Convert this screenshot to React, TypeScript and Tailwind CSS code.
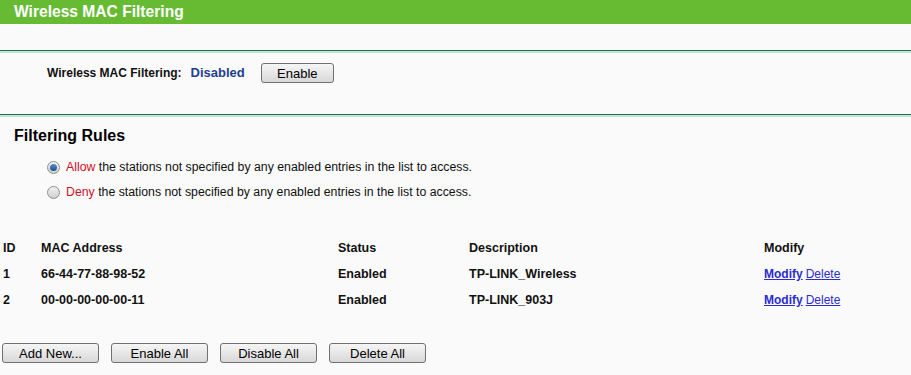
const entries = [
  { id: 1, mac: "66-44-77-88-98-52", status: "Enabled", desc: "TP-LINK_Wireless" },
  { id: 2, mac: "00-00-00-00-00-11", status: "Enabled", desc: "TP-LINK_903J" },
];

const btn =
  "h-[20px] rounded-[3px] border border-[#707070] bg-gradient-to-b from-[#f6f6f6] to-[#d8d8d8] text-[13px] text-black leading-none";

function Divider() {
  return (
    <div>
      <div className="h-px bg-[#2b6a45]" />
      <div className="h-[2px] bg-[#b7ead2]" />
    </div>
  );
}

function Radio({ checked }: { checked?: boolean }) {
  return (
    <span className="flex h-[13px] w-[13px] items-center justify-center rounded-full border border-[#8e8e8e] bg-gradient-to-b from-[#f2f2f2] to-[#cfcfcf]">
      {checked && <span className="h-[7px] w-[7px] rounded-full bg-gradient-to-b from-[#5a8fd0] to-[#1d4f8c]" />}
    </span>
  );
}

export default function App() {
  return (
    <div className="h-[375px] w-[911px] bg-[#fafafa] font-['Liberation_Sans',Arial,sans-serif] text-[12.5px] text-[#111]">
      {/* Title bar */}
      <div className="flex h-[24px] items-center bg-[#66bb33] pl-[14px]">
        <h1 className="text-[15.6px] font-bold text-white">Wireless MAC Filtering</h1>
      </div>
      <div className="h-[26px]" />
      <Divider />

      {/* Status */}
      <div className="flex h-[61px] items-start pt-[10px] pl-[47px]">
        <div className="flex h-[20px] items-center">
          <span className="text-[12px] font-bold">Wireless MAC Filtering:</span>
          <span className="ml-[9px] text-[13px] font-bold text-[#1f3f8f]">Disabled</span>
          <button className={`${btn} ml-[16px] w-[73px]`}>Enable</button>
        </div>
      </div>
      <Divider />

      {/* Rules */}
      <div className="pt-[10px] pl-[14px]">
        <h2 className="h-[18px] text-[16px] leading-[18px] font-bold text-black">Filtering Rules</h2>
      </div>
      <div className="mt-[10px] pl-[47px] text-[12.3px]">
        <label className="flex h-[25px] items-center gap-[6px]">
          <Radio checked />
          <span>
            <span className="text-[#d0102a]">Allow</span> the stations not specified by any enabled entries in the list to access.
          </span>
        </label>
        <label className="flex h-[25px] items-center gap-[6px]">
          <Radio />
          <span>
            <span className="text-[#d0102a]">Deny</span> the stations not specified by any enabled entries in the list to access.
          </span>
        </label>
      </div>

      {/* Table */}
      <div className="mt-[30px] pl-[3px] font-bold">
        <div className="flex h-[26px] items-center">
          <div className="w-[38px]">ID</div>
          <div className="w-[297px]">MAC Address</div>
          <div className="w-[131px]">Status</div>
          <div className="w-[295px]">Description</div>
          <div>Modify</div>
        </div>
        {entries.map((e) => (
          <div key={e.id} className="flex h-[26px] items-center">
            <div className="w-[38px]">{e.id}</div>
            <div className="w-[297px]">{e.mac}</div>
            <div className="w-[131px]">{e.status}</div>
            <div className="w-[295px]">{e.desc}</div>
            <div className="flex gap-[3px] text-[12px]">
              <a className="text-[#2b2bd0] underline">Modify</a>
              <a className="font-normal text-[#2b2bd0] underline">Delete</a>
            </div>
          </div>
        ))}
      </div>

      {/* Actions */}
      <div className="mt-[30px] flex gap-[12px] pl-[2px]">
        <button className={`${btn} w-[97px]`}>Add New...</button>
        <button className={`${btn} w-[97px]`}>Enable All</button>
        <button className={`${btn} w-[97px]`}>Disable All</button>
        <button className={`${btn} w-[97px]`}>Delete All</button>
      </div>
    </div>
  );
}
